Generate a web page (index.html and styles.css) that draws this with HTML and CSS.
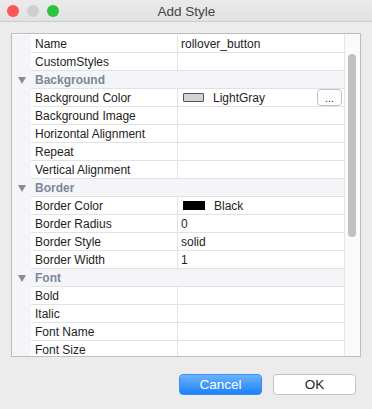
FILE: index.html
```html
<!DOCTYPE html>
<html lang="en">
<head>
    <meta charset="UTF-8">
    <title>Add Style</title>
    <link rel="stylesheet" href="styles.css">
</head>
<body>
    <div class="window">
        <div class="titlebar">
            <div class="lights">
                <span class="light red"></span>
                <span class="light gray"></span>
                <span class="light green"></span>
            </div>
            <div class="title">Add Style</div>
        </div>
        <div class="content">
            <div class="grid">
                <div class="rows">
                    <div class="row"><div class="gutter"></div><div class="name">Name</div><div class="value">rollover_button</div></div>
                    <div class="row"><div class="gutter"></div><div class="name">CustomStyles</div><div class="value"></div></div>
                    <div class="row section"><div class="gutter"><svg width="8" height="7" viewBox="0 0 8 7"><polygon points="0,0 8,0 4,7" fill="#8c8c8c"/></svg></div><div class="head">Background</div></div>
                    <div class="row"><div class="gutter"></div><div class="name">Background Color</div><div class="value"><span class="swatch light-gray"></span>LightGray<span class="more">...</span></div></div>
                    <div class="row"><div class="gutter"></div><div class="name">Background Image</div><div class="value"></div></div>
                    <div class="row"><div class="gutter"></div><div class="name">Horizontal Alignment</div><div class="value"></div></div>
                    <div class="row"><div class="gutter"></div><div class="name">Repeat</div><div class="value"></div></div>
                    <div class="row"><div class="gutter"></div><div class="name">Vertical Alignment</div><div class="value"></div></div>
                    <div class="row section"><div class="gutter"><svg width="8" height="7" viewBox="0 0 8 7"><polygon points="0,0 8,0 4,7" fill="#8c8c8c"/></svg></div><div class="head">Border</div></div>
                    <div class="row"><div class="gutter"></div><div class="name">Border Color</div><div class="value"><span class="swatch black"></span>Black</div></div>
                    <div class="row"><div class="gutter"></div><div class="name">Border Radius</div><div class="value">0</div></div>
                    <div class="row"><div class="gutter"></div><div class="name">Border Style</div><div class="value">solid</div></div>
                    <div class="row"><div class="gutter"></div><div class="name">Border Width</div><div class="value">1</div></div>
                    <div class="row section"><div class="gutter"><svg width="8" height="7" viewBox="0 0 8 7"><polygon points="0,0 8,0 4,7" fill="#8c8c8c"/></svg></div><div class="head">Font</div></div>
                    <div class="row"><div class="gutter"></div><div class="name">Bold</div><div class="value"></div></div>
                    <div class="row"><div class="gutter"></div><div class="name">Italic</div><div class="value"></div></div>
                    <div class="row"><div class="gutter"></div><div class="name">Font Name</div><div class="value"></div></div>
                    <div class="row"><div class="gutter"></div><div class="name">Font Size</div><div class="value"></div></div>
                </div>
                <div class="scrollbar"><div class="thumb"></div></div>
            </div>
            <div class="buttons">
                <button class="btn primary" type="button">Cancel</button>
                <button class="btn" type="button">OK</button>
            </div>
        </div>
    </div>
</body>
</html>
```

FILE: styles.css
```css
body {
    margin: 0;
    font-family: "Liberation Sans", Arial, sans-serif;
    font-size: 12px;
    color: #1e1e1e;
    background: #ececec;
}
.window {
    width: 372px;
    height: 409px;
    background: #ececec;
    overflow: hidden;
}
.titlebar {
    height: 21px;
    border-bottom: 1px solid #cdcdcd;
    background: linear-gradient(#ebebeb, #e2e2e2);
    display: flex;
    align-items: center;
}
.lights {
    display: flex;
    gap: 8px;
    padding-left: 7px;
    padding-top: 1px;
}
.light {
    width: 12px;
    height: 12px;
    border-radius: 50%;
    display: block;
}
.red { background: #fc5753; }
.gray { background: #cfcfcf; }
.green { background: #2dc33f; }
.title {
    flex: 1;
    text-align: center;
    font-size: 13.5px;
    color: #444;
    margin-left: -58px;
    padding-top: 1px;
}
.content {
    padding: 11px 0 0 11px;
}
.grid {
    width: 348px;
    height: 322px;
    border: 1px solid #bdbdbd;
    background: #fff;
    display: flex;
}
.rows {
    flex: 1;
    overflow: hidden;
    padding-top: 1px;
}
.row {
    display: grid;
    grid-template-columns: 19px 147px 1fr;
    height: 18px;
}
.gutter {
    background: #f4f5f8;
    display: flex;
    align-items: center;
    justify-content: center;
    padding-left: 1px;
}
.name, .value {
    border-bottom: 1px solid #e2e2e2;
    display: flex;
    align-items: center;
    white-space: nowrap;
}
.name {
    padding-left: 4px;
    border-right: 1px solid #e2e2e2;
}
.value {
    padding-left: 3px;
}
.section .head {
    grid-column: 2 / 4;
    background: #f4f5f9;
    border-bottom: 1px solid #e2e2e2;
    color: #7d8797;
    font-weight: bold;
    padding-left: 4px;
    display: flex;
    align-items: center;
}
.swatch {
    width: 19px;
    height: 7px;
    margin: 0 9px 0 2px;
    border: 1px solid #444;
}
.light-gray { background: #d3d3d3; border-color: #555; border-radius: 1px; }
.black { background: #000; border-color: #000; width: 20px; }
.more {
    margin-left: auto;
    margin-right: 2px;
    width: 23px;
    height: 15px;
    border: 1px solid #c2c2c2;
    border-radius: 4px;
    background: #fff;
    display: flex;
    align-items: center;
    justify-content: center;
    font-size: 11px;
    line-height: 8px;
    color: #333;
}
.scrollbar {
    width: 15px;
    border-left: 1px solid #e6e6e6;
    background: #fafafa;
    padding-top: 20px;
}
.thumb {
    width: 8px;
    height: 183px;
    margin-left: 3px;
    border-radius: 4px;
    background: #c1c1c1;
}
.buttons {
    display: flex;
    justify-content: flex-end;
    gap: 11px;
    padding-right: 16px;
    margin-top: 17px;
}
.btn {
    width: 83px;
    height: 21px;
    border: 1px solid #c4c4c4;
    border-radius: 4px;
    background: #fff;
    font-family: "Liberation Sans", Arial, sans-serif;
    font-size: 13.5px;
    color: #1e1e1e;
    padding: 0;
}
.primary {
    border-color: #3b8df5;
    background: linear-gradient(#6cb3fa, #1b81fa);
    color: #fff;
}
```
